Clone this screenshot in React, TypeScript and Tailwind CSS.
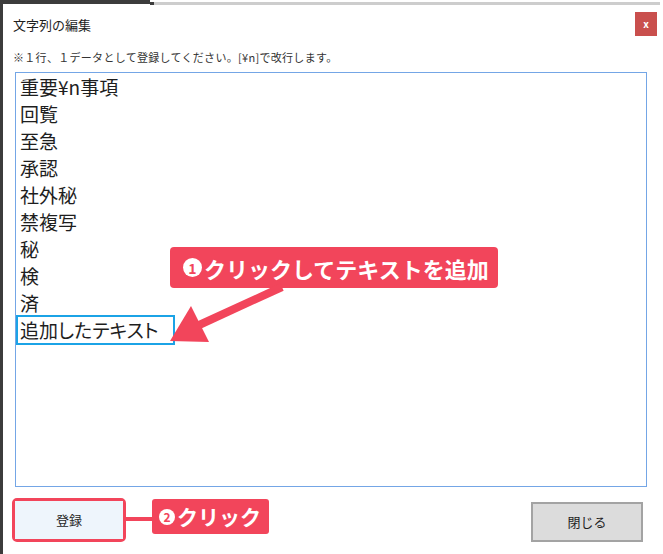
const lines = ['重要¥n事項', '回覧', '至急', '承認', '社外秘', '禁複写', '秘', '検', '済'];

function Badge({ n, size }: { n: string; size: string }) {
  return (
    <span
      className={`inline-flex shrink-0 items-center justify-center rounded-full bg-white font-bold leading-none text-[#f2455b] ${size}`}
    >
      {n}
    </span>
  );
}

export default function App() {
  return (
    <div
      className="relative flex h-[554px] w-[663px] overflow-hidden bg-white text-[#1e1e1e]"
      style={{ fontFamily: '"Noto Sans CJK JP", "Noto Sans", sans-serif' }}
    >
      {/* left window edge */}
      <div className="w-[3px] shrink-0 bg-[#3c3c3c]" />

      <div className="flex min-w-0 flex-1 flex-col">
        {/* top strip */}
        <div className="flex h-[5px] items-start">
          <div className="h-[4px] w-[147px] bg-[#3c3c3c]" />
          <div className="mt-[2px] h-[3px] w-[4px] bg-[#3c3c3c]" />
          <div className="mr-[3px] mt-[2px] h-[3px] flex-1 bg-[#cdcdcd]" />
        </div>

        {/* header */}
        <div className="mt-[7px] flex h-[24px] items-center justify-between pl-[10px] pr-[6px]">
          <span className="text-[13px] leading-none">文字列の編集</span>
          <button className="flex h-[24px] w-[22px] items-center justify-center bg-[#c94f4d] text-[10px] font-bold leading-none text-white">
            x
          </button>
        </div>

        <p className="mt-[14px] h-[14px] pl-[10px] text-[11px] leading-[14px] tracking-[0.3px] text-[#333]">
          ※１行、１データとして登録してください。[¥n]で改行します。
        </p>

        {/* text area */}
        <div className="ml-[12px] mt-[8px] h-[415px] w-[632px] border border-[#74a6e6] text-[19px] leading-[27px] [font-feature-settings:'palt']">
          {lines.map((l) => (
            <div key={l} className="pl-[4px]">
              {l}
            </div>
          ))}
          <div className="relative pl-[4px]">
            追加したテキスト
            <span className="absolute left-0 top-[-1px] h-[30px] w-[159px] border-2 border-[#1ba3e6]" />
          </div>
        </div>

        {/* buttons */}
        <div className="mt-[11px] flex items-start">
          <div className="ml-[9px] h-[44px] w-[114px] rounded-[5px] border-[3px] border-[#f2455b]">
            <button className="flex h-full w-full items-center justify-center bg-[#eef5fc] text-[13px]">
              登録
            </button>
          </div>
          <div className="mt-[19px] h-[4px] w-[26px] bg-[#f2455b]" />
          <div className="mt-[1px] flex h-[35px] w-[117px] items-center gap-[2px] rounded-[3px] bg-[#f2455b] pl-[7px] text-[21px] font-bold leading-none text-white">
            <Badge n="2" size="h-[16px] w-[16px] text-[12px]" />
            <span>クリック</span>
          </div>
          <button className="ml-auto mr-[20px] mt-[4px] flex h-[40px] w-[112px] items-center justify-center border-2 border-[#a3a3a3] bg-[#dcdcdc] text-[13px]">
            閉じる
          </button>
        </div>
      </div>

      {/* callout 1 */}
      <div className="absolute left-[170px] top-[247px] flex h-[41px] w-[328px] items-center gap-[2px] rounded-[4px] bg-[#f2455b] pl-[13px] text-[22px] font-bold leading-none text-white">
        <Badge n="1" size="h-[19px] w-[19px] text-[14px]" />
        <span>クリックしてテキストを追加</span>
      </div>
      <svg className="pointer-events-none absolute left-0 top-0" width="663" height="554">
        <line x1="282" y1="287" x2="197" y2="326" stroke="#f2455b" strokeWidth="8" />
        <polygon points="191,306 170,341 209,342" fill="#f2455b" />
      </svg>
    </div>
  );
}
